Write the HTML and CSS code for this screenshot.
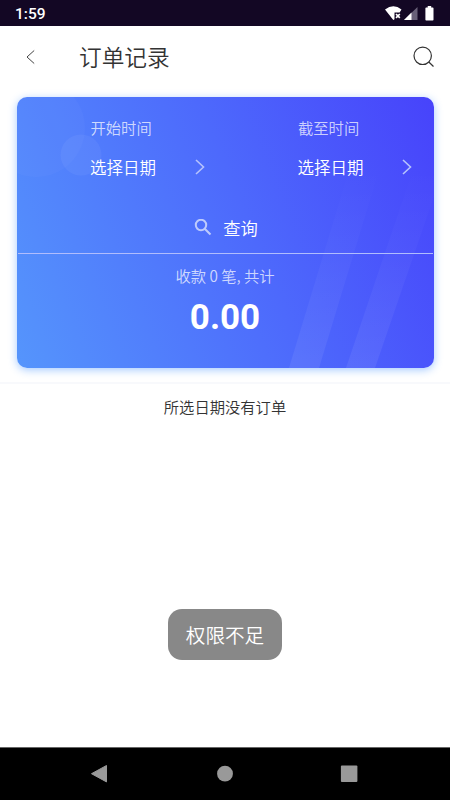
FILE: index.html
```html
<!DOCTYPE html>
<html lang="zh-CN">
<head>
<meta charset="utf-8">
<title>订单记录</title>
<link rel="stylesheet" href="styles.css">
</head>
<body>
<div class="screen">
  <div class="status">
    <span class="clock">1:59</span>
    <svg class="status-icons" width="52" height="18" viewBox="0 0 52 18">
      <path d="M1 4.500Q9.500-1.900 17.500 4.500L15.600 7.500H10.500V14.300L9.300 15Z" fill="#fff"/>
      <path d="M12 9L15.800 12.800M15.800 9L12 12.800" stroke="#fff" stroke-width="1.700"/>
      <path d="M33.500 2V15H20Z" fill="#686078"/>
      <path d="M27.500 7.500V15H20Z" fill="#fff"/>
      <path d="M43.700 1h3.500v1.500h1.500q.8 0 .8.800v11.500q0 .8-.8.800h-6.500q-.8 0-.8-.8v-11.500q0-.8.8-.8h1.500z" fill="#fff"/>
    </svg>
  </div>
  <header class="header">
    <svg class="back" width="12" height="16" viewBox="0 0 12 16"><path d="M10.200 1.500L3 8L10.200 14.500" fill="none" stroke="#444" stroke-width="1"/></svg>
    <h1 class="title">订单记录</h1>
    <svg class="search" width="24" height="24" viewBox="0 0 24 24" fill="none" stroke="#333" stroke-width="1.200"><circle cx="11.700" cy="10.800" r="8.700"/><path d="M17.800 17L22.500 21.500"/></svg>
  </header>
  <section class="summary">
    <div class="card">
      <svg class="decor" viewBox="0 0 417 271">
        <circle cx="19" cy="31" r="49" fill="#fff" fill-opacity=".025"/>
        <circle cx="64" cy="58" r="20.500" fill="#fff" fill-opacity=".05"/>
        <path d="M272 271L333 70H363L302 271Z" fill="url(#beam)"/>
        <path d="M329 271L397 70H427L358 271Z" fill="url(#beam)"/>
        <defs><linearGradient id="beam" x1="0" y1="1" x2="0" y2="0"><stop offset="0" stop-color="#fff" stop-opacity=".07"/><stop offset=".6" stop-color="#fff" stop-opacity=".025"/><stop offset="1" stop-color="#fff" stop-opacity="0"/></linearGradient></defs>
      </svg>
      <div class="dates">
        <div class="date">
          <span class="label">开始时间</span>
          <div class="value">选择日期<svg class="chevron" width="10" height="16" viewBox="0 0 10 16"><path d="M1 1L8.500 8L1 15"/></svg></div>
        </div>
        <div class="date">
          <span class="label">截至时间</span>
          <div class="value">选择日期<svg class="chevron" width="10" height="16" viewBox="0 0 10 16"><path d="M1 1L8.500 8L1 15"/></svg></div>
        </div>
      </div>
      <div class="query">
        <svg width="18" height="18" viewBox="0 0 18 18" fill="none" stroke="#bdcbfc" stroke-width="2"><circle cx="7" cy="6" r="5.200"/><path d="M10.700 9.700L16.500 15.500"/></svg>
        <span>查询</span>
      </div>
      <div class="total">
        <span class="caption">收款 0 笔, 共计</span>
        <strong class="amount">0.00</strong>
      </div>
    </div>
  </section>
  <main class="list">
    <p class="empty">所选日期没有订单</p>
  </main>
  <nav class="nav">
    <svg width="18" height="20" viewBox="0 0 18 20"><path d="M.5 9.700L15.500 1.500V17.900Z" fill="#999" stroke="#999" stroke-linejoin="round"/></svg>
    <svg width="18" height="20" viewBox="0 0 18 20"><circle cx="9" cy="9.700" r="7.900" fill="#999"/></svg>
    <svg width="18" height="20" viewBox="0 0 18 20"><rect x=".9" y="1.400" width="16.500" height="16.500" rx="1" fill="#999"/></svg>
  </nav>
  <div class="toast">权限不足</div>
</div>
</body>
</html>
```
FILE: styles.css
```css
* { box-sizing: border-box; }
body { margin: 0; font-family: "Noto Sans CJK SC", sans-serif; font-weight: 350; background: #fff; }
svg { display: block; flex: none; }
.screen { position: relative; display: flex; flex-direction: column; width: 450px; height: 800px; overflow: hidden; }
.status { display: flex; justify-content: space-between; height: 26px; padding: 5px 14px 0 15px; background: #130724; color: #fff; }
.clock { font: 500 15.5px/18px Roboto, sans-serif; }
.header { display: flex; align-items: center; height: 62px; padding: 0 15px 0 24px; }
.title { flex: 1; margin: 0 0 0 43px; font-size: 22.700px; line-height: 34px; font-weight: 350; color: #333; }
.summary { height: 296px; padding: 9px 16.500px 0; border-bottom: 2px solid #f8f9fc; }
.card { position: relative; height: 271px; border-radius: 10px; color: #fff; background: linear-gradient(68deg, #5595fc 0%, #4d69fc 55%, #4743fb 100%); box-shadow: 0 2px 9px rgba(65, 145, 255, .48); }
.decor { position: absolute; inset: 0; width: 100%; height: 100%; border-radius: 10px; overflow: hidden; }
.dates, .query, .total { position: relative; }
.dates { display: grid; grid-template-columns: 207.500px 207.500px; height: 112px; padding-top: 18px; }
.date { padding: 0 20px 0 73.500px; }
.label { display: block; padding-left: .5px; font-size: 15.300px; line-height: 24px; color: rgba(255, 255, 255, .74); }
.value { display: flex; align-items: center; justify-content: space-between; margin-top: 14.500px; font-size: 16.500px; line-height: 26px; }
.chevron { margin-right: -.5px; fill: none; stroke: #b6c3fc; stroke-width: 1.600; }
.query { display: flex; align-items: center; justify-content: center; gap: 11px; height: 45px; padding: 0 0 7px 2px; margin: 0 1px; border-bottom: 1px solid #b1bdfd; font-size: 17.300px; line-height: 26px; }
.total { display: flex; flex-direction: column; align-items: center; padding-top: 9px; }
.caption { font-size: 15.300px; line-height: 24px; color: rgba(255, 255, 255, .74); }
.amount { margin-top: 10px; font: 700 35px/42px Roboto, sans-serif; }
.list { flex: 1; padding-top: 10px; }
.empty { margin: 0; font-size: 15.300px; line-height: 24px; text-align: center; color: #333; }
.nav { display: flex; align-items: center; justify-content: space-between; height: 53px; padding: 0 92px 0 91px; background: #000; border-top: 1px solid #666; }
.toast { position: absolute; left: 168px; top: 608.500px; width: 114px; height: 51.500px; border-radius: 14px; background: #888; color: #fff; font-size: 19.600px; line-height: 52px; text-align: center; }
```
